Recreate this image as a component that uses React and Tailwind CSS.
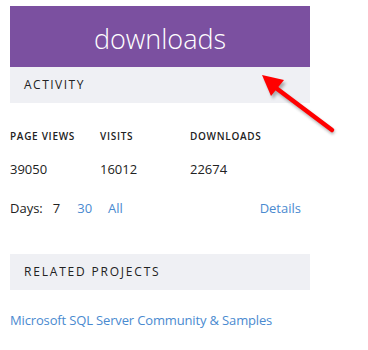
export default function App() {
  return (
    <div className="relative w-[368px] h-[350px] bg-white overflow-hidden" style={{ fontFamily: '"Open Sans", "Noto Sans", sans-serif' }}>
      <div className="w-[300px] ml-[10px] pt-[6px]">
        <div className="h-[61px] bg-[#7b50a0] flex items-center justify-center pt-[3px]">
          <span className="text-white text-[27px] font-light leading-none">downloads</span>
        </div>
        <div className="h-[36px] bg-[#eff0f4] flex items-center pl-[14px]">
          <span className="text-[12px] tracking-[1.5px] text-[#222]">ACTIVITY</span>
        </div>
        <div className="flex mt-[26px] text-[10px] leading-[15px] tracking-[0.7px] text-[#222] font-semibold">
          <div className="w-[90px]">PAGE VIEWS</div>
          <div className="w-[90px]">VISITS</div>
          <div>DOWNLOADS</div>
        </div>
        <div className="flex mt-[15px] text-[13px] leading-[20px] text-[#222]">
          <div className="w-[90px]">39050</div>
          <div className="w-[90px]">16012</div>
          <div>22674</div>
        </div>
        <div className="flex mt-[19px] text-[13px] leading-[20px] items-center">
          <span className="text-[#222]">Days:</span>
          <span className="text-[#222] ml-[10px]">7</span>
          <span className="text-[#4a8ad0] ml-[17px]">30</span>
          <span className="text-[#4a8ad0] ml-[16px]">All</span>
          <span className="text-[#4a8ad0] ml-auto mr-[9px]">Details</span>
        </div>
        <div className="h-[36px] bg-[#eff0f4] flex items-center pl-[14px] mt-[36px]">
          <span className="text-[12px] tracking-[1.8px] text-[#222]">RELATED PROJECTS</span>
        </div>
        <div className="mt-[20px] text-[13px] leading-[20px] tracking-[-0.15px] text-[#4a8ad0]">Microsoft SQL Server Community &amp; Samples</div>
      </div>
      <svg className="absolute left-0 top-0" width="368" height="350">
        <defs>
          <filter id="sh" x="-20%" y="-20%" width="140%" height="140%">
            <feGaussianBlur stdDeviation="1.5" />
          </filter>
        </defs>
        <g opacity="0.45" filter="url(#sh)" transform="translate(2,3)">
          <line x1="332" y1="130" x2="276" y2="88" stroke="#555" strokeWidth="4.5" />
          <polygon points="262,75 284,80 271,96" fill="#555" />
        </g>
        <line x1="332" y1="130" x2="276" y2="88" stroke="#f00" strokeWidth="4.5" strokeLinecap="round" />
        <polygon points="262,75 284,80 271,96" fill="#f00" />
      </svg>
    </div>
  );
}
